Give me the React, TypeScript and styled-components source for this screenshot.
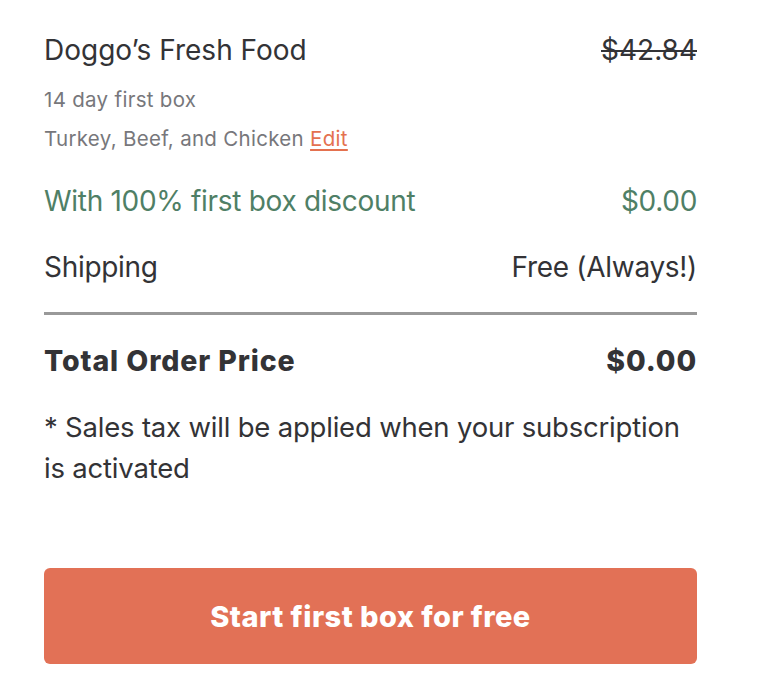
import { FC } from 'react';
import styled, { createGlobalStyle } from 'styled-components';

const GlobalStyle = createGlobalStyle`
  body {
    margin: 0;
    background: #ffffff;
    font-family: Inter, "Liberation Sans", sans-serif;
    color: #333336;
  }
`;

const App: FC = () => {
  return (
    <>
      <GlobalStyle />
      <Wrapper>
        <Product>
          <Row>
            <ProductName>Doggo’s Fresh Food</ProductName>
            <OldPrice>$42.84</OldPrice>
          </Row>
          <Meta>14 day first box</Meta>
          <Meta $gap={11}>
            Turkey, Beef, and Chicken <EditLink href="#">Edit</EditLink>
          </Meta>
        </Product>
        <LineRow $tone="discount">
          <span>With 100% first box discount</span>
          <span>$0.00</span>
        </LineRow>
        <LineRow>
          <span>Shipping</span>
          <span>Free (Always!)</span>
        </LineRow>
        <Divider />
        <TotalRow>
          <span>Total Order Price</span>
          <span>$0.00</span>
        </TotalRow>
        <TaxNote>* Sales tax will be applied when your subscription is activated</TaxNote>
        <StartButton>Start first box for free</StartButton>
      </Wrapper>
    </>
  );
};

export default App;

const Wrapper = styled.div`
  width: 653px;
  margin-left: 44px;
  padding-top: 30px;
  display: flex;
  flex-direction: column;
`;

const Product = styled.div`
  display: flex;
  flex-direction: column;
`;

const Row = styled.div`
  display: flex;
  justify-content: space-between;
  align-items: baseline;
`;

const ProductName = styled.span`
  font-size: 28px;
  line-height: 40px;
`;

const OldPrice = styled.span`
  font-size: 28px;
  line-height: 40px;
  text-decoration: line-through;
  text-decoration-thickness: 2px;
`;

const Meta = styled.div<{ $gap?: number }>`
  font-size: 20.5px;
  line-height: 28px;
  letter-spacing: 0.3px;
  color: #77777b;
  margin-top: ${(p) => p.$gap ?? 16}px;
`;

const EditLink = styled.a`
  color: #e4714f;
  text-decoration: underline;
  text-underline-offset: 3px;
`;

const LineRow = styled.div<{ $tone?: 'discount' }>`
  display: flex;
  justify-content: space-between;
  font-size: 28px;
  line-height: 40px;
  letter-spacing: -0.3px;
  margin-top: ${(p) => (p.$tone === 'discount' ? '28px' : '26px')};
  color: ${(p) => (p.$tone === 'discount' ? '#4f7f66' : '#333336')};
`;

const Divider = styled.hr`
  margin: 25px 0 0;
  border: none;
  height: 3px;
  background: #999999;
`;

const TotalRow = styled.div`
  display: flex;
  justify-content: space-between;
  font-size: 28.5px;
  line-height: 40px;
  font-weight: 800;
  letter-spacing: 0.9px;
  margin-top: 26px;
`;

const TaxNote = styled.p`
  margin: 26px 0 0;
  font-size: 27.5px;
  line-height: 41px;
  letter-spacing: -0.2px;
`;

const StartButton = styled.button`
  margin-top: 79px;
  height: 96px;
  border: none;
  border-radius: 6px;
  background: #e27156;
  color: #ffffff;
  font-family: Inter, "Liberation Sans", sans-serif;
  font-size: 29px;
  font-weight: 800;
  letter-spacing: 0.45px;
  cursor: pointer;
`;
